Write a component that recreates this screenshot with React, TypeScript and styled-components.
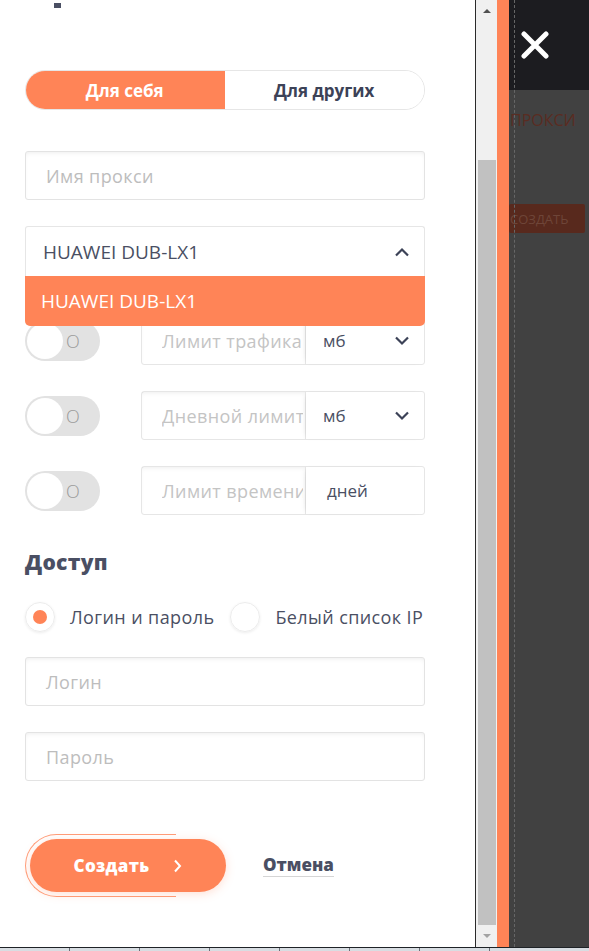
import React from 'react'
import styled, { createGlobalStyle } from 'styled-components'

const GlobalStyle = createGlobalStyle`
    html, body {
        margin: 0;
        padding: 0;
        background: #ffffff;
    }
    body {
        font-family: 'Open Sans', Lato, sans-serif;
        overflow: hidden;
    }
    * {
        box-sizing: border-box;
    }
`

const Screen = styled.div`
    width: 589px;
    height: 951px;
    display: flex;
    flex-direction: column;
`
const Main = styled.div`
    flex: 1;
    display: flex;
    min-height: 0;
`
const Panel = styled.div`
    width: 476px;
    border-right: 1px solid #2a2a2a;
    background: #ffffff;
    padding: 0 50px 0 25px;
    position: relative;
    overflow: hidden;
`
const HeadingTail = styled.div`
    width: 7px;
    height: 5px;
    margin: 3px 0 0 29px;
    background: #4a4f63;
`
const Tabs = styled.div`
    margin-top: 62px;
    height: 40px;
    display: flex;
    border-radius: 20px;
    border: 1px solid #e6e6e6;
    overflow: hidden;
`
const Tab = styled.div<{ $active?: boolean }>`
    flex: 1;
    display: flex;
    align-items: center;
    justify-content: center;
    font-size: 17px;
    font-weight: 700;
    color: ${(p) => (p.$active ? '#ffffff' : '#3c4257')};
    background: ${(p) => (p.$active ? '#ff8457' : '#ffffff')};
    margin: ${(p) => (p.$active ? '-1px 0 -1px -1px' : '0')};
`
const Field = styled.div<{ $top: number }>`
    margin-top: ${(p) => p.$top}px;
    height: 49px;
    border: 1px solid #e3e3e3;
    border-radius: 3px;
    box-shadow: inset 0 3px 6px -4px rgba(0, 0, 0, 0.12);
    display: flex;
    align-items: center;
    padding-left: 20px;
    font-size: 18px;
    letter-spacing: 0.4px;
    color: #bdbdbd;
`
const SelectWrap = styled.div`
    position: relative;
    margin-top: 26px;
`
const SelectBox = styled.div`
    height: 50px;
    border: 1px solid #e6e6e6;
    border-bottom: none;
    border-radius: 3px 3px 0 0;
    display: flex;
    align-items: center;
    justify-content: space-between;
    padding: 0 14px 0 17px;
    font-size: 19px;
    color: #4a4f63;
`
const Option = styled.div`
    position: absolute;
    left: 0;
    right: 0;
    top: 50px;
    height: 50px;
    background: #ff8457;
    border-radius: 0 0 5px 5px;
    color: #ffffff;
    font-size: 19px;
    display: flex;
    align-items: center;
    padding-left: 16px;
    z-index: 2;
`
const LimitRow = styled.div<{ $top: number }>`
    margin-top: ${(p) => p.$top}px;
    height: 49px;
    display: flex;
    align-items: center;
`
const Toggle = styled.div`
    width: 75px;
    height: 40px;
    border-radius: 20px;
    background: #e2e2e2;
    position: relative;
    display: flex;
    align-items: center;
    padding-left: 41px;
    font-size: 18px;
    font-weight: 300;
    color: #9a9a9a;
    &::before {
        content: '';
        position: absolute;
        left: 2px;
        top: 2px;
        width: 36px;
        height: 36px;
        border-radius: 50%;
        background: #ffffff;
    }
`
const Group = styled.div`
    margin-left: 41px;
    flex: 1;
    height: 49px;
    display: flex;
    border: 1px solid #e6e6e6;
    border-radius: 3px;
`
const GroupInput = styled.div`
    width: 164px;
    border-right: 1px solid #e6e6e6;
    box-shadow: inset 0 3px 6px -4px rgba(0, 0, 0, 0.12);
    display: flex;
    align-items: center;
    padding: 0 2px 0 20px;
    font-size: 18px;
    letter-spacing: 0.4px;
    color: #c4c4c4;
`
const Clip = styled.span`
    flex: 1;
    white-space: nowrap;
    overflow: hidden;
`
const Unit = styled.div<{ $pad: number }>`
    flex: 1;
    display: flex;
    align-items: center;
    justify-content: space-between;
    padding: 0 14px 0 ${(p) => p.$pad}px;
    font-size: 17px;
    color: #4a4f63;
    box-shadow: -3px 0 6px -4px rgba(0, 0, 0, 0.15);
`
const SectionTitle = styled.div`
    margin-top: 33px;
    font-size: 21px;
    font-weight: 800;
    letter-spacing: 0.3px;
    color: #4a4f63;
`
const Radios = styled.div`
    margin-top: 26px;
    display: flex;
    align-items: center;
`
const Radio = styled.div<{ $checked?: boolean }>`
    width: 30px;
    height: 30px;
    border-radius: 50%;
    border: 1px solid #ececec;
    box-shadow: 0 1px 3px rgba(0, 0, 0, 0.08);
    display: flex;
    align-items: center;
    justify-content: center;
    flex-shrink: 0;
    &::after {
        content: '';
        width: 14px;
        height: 14px;
        border-radius: 50%;
        background: ${(p) => (p.$checked ? '#ff8457' : 'transparent')};
    }
`
const RadioLabel = styled.div`
    margin: 0 16px 0 15px;
    font-size: 18px;
    letter-spacing: 0.4px;
    color: #4a4f63;
    white-space: nowrap;
`
const Actions = styled.div`
    margin-top: 58px;
    display: flex;
    align-items: center;
`
const CreateButton = styled.div`
    margin-left: 5px;
    width: 196px;
    height: 53px;
    border-radius: 27px;
    background: #ff8457;
    color: #ffffff;
    font-size: 17px;
    font-weight: 800;
    letter-spacing: 0.3px;
    display: flex;
    align-items: center;
    justify-content: center;
    gap: 24px;
    position: relative;
    box-shadow: 0 2px 10px rgba(255, 132, 87, 0.25);
    &::before {
        content: '';
        position: absolute;
        left: -5px;
        top: -5px;
        bottom: -5px;
        width: 150px;
        border: 1px solid #ff8457;
        border-right: none;
        border-radius: 32px 0 0 32px;
        opacity: 0.8;
    }
`
const Cancel = styled.div`
    margin-left: 37px;
    font-size: 17px;
    font-weight: 800;
    color: #4a4f63;
    border-bottom: 1px solid #d5d5d5;
    line-height: 22px;
`
const Scrollbar = styled.div`
    width: 21px;
    background: #f0f0f0;
    display: flex;
    flex-direction: column;
    align-items: center;
`
const Arrow = styled.div<{ $down?: boolean }>`
    height: 22px;
    display: flex;
    align-items: center;
    justify-content: center;
    &::after {
        content: '';
        border-left: 4px solid transparent;
        border-right: 4px solid transparent;
        ${(p) =>
            p.$down ? 'border-top: 4px solid #a3a3a3;' : 'border-bottom: 4px solid #505050;'}
    }
`
const Thumb = styled.div`
    margin-top: 138px;
    width: 18px;
    flex: 1;
    background: #c1c1c1;
`
const Accent = styled.div`
    width: 12px;
    background: #ff8457;
`
const Backdrop = styled.div`
    flex: 1;
    background: #414141;
    display: flex;
    flex-direction: column;
    position: relative;
    &::before {
        content: '';
        position: absolute;
        left: 5px;
        top: 0;
        bottom: 0;
        border-left: 1px dashed #666666;
    }
`
const CloseBar = styled.div`
    height: 90px;
    background: #1c1c20;
    display: flex;
    align-items: center;
    padding-left: 12px;
`
const BackTitle = styled.div`
    margin-top: 19px;
    font-size: 16px;
    color: #5a2c22;
    padding-left: 1px;
`
const BackButton = styled.div`
    margin: 73px 4px 0 0;
    height: 29px;
    background: #58291d;
    border-radius: 2px;
    display: flex;
    align-items: center;
    padding-left: 1px;
    font-size: 13px;
    color: #6e4538;
`
const Taskbar = styled.div`
    height: 4px;
    background: #d8dde2;
    border-top: 1px solid #1e2226;
    display: flex;
`
const TaskSlot = styled.div`
    width: 70px;
    border-right: 1px solid #6a7078;
`

const ChevronUp = () => (
    <svg width="16" height="10" viewBox="0 0 16 10">
        <path d="M2 8.5 L8 2.5 L14 8.5" fill="none" stroke="#3c4257" strokeWidth="2.2" />
    </svg>
)
const ChevronDown = () => (
    <svg width="16" height="10" viewBox="0 0 16 10">
        <path d="M2 1.5 L8 7.5 L14 1.5" fill="none" stroke="#3c4257" strokeWidth="2.2" />
    </svg>
)
const ArrowRight = () => (
    <svg width="9" height="14" viewBox="0 0 9 14">
        <path d="M2 1.5 L7 7 L2 12.5" fill="none" stroke="#ffffff" strokeWidth="2" />
    </svg>
)
const CloseIcon = () => (
    <svg width="28" height="28" viewBox="0 0 28 28">
        <path d="M3 3 L25 25 M25 3 L3 25" stroke="#ffffff" strokeWidth="5" strokeLinecap="round" />
    </svg>
)

const limits = [
    { placeholder: 'Лимит трафика', unit: 'мб', select: true, top: 40, pad: 17 },
    { placeholder: 'Дневной лимит', unit: 'мб', select: true, top: 26, pad: 17 },
    { placeholder: 'Лимит времени', unit: 'дней', select: false, top: 26, pad: 21 },
]

export default function App() {
    return (
        <Screen>
            <GlobalStyle />
            <Main>
                <Panel>
                    <HeadingTail />
                    <Tabs>
                        <Tab $active>Для себя</Tab>
                        <Tab>Для других</Tab>
                    </Tabs>
                    <Field $top={41}>Имя прокси</Field>
                    <SelectWrap>
                        <SelectBox>
                            HUAWEI DUB-LX1
                            <ChevronUp />
                        </SelectBox>
                        <Option>HUAWEI DUB-LX1</Option>
                    </SelectWrap>
                    {limits.map((l) => (
                        <LimitRow key={l.placeholder} $top={l.top}>
                            <Toggle>O</Toggle>
                            <Group>
                                <GroupInput>
                                    <Clip>{l.placeholder}</Clip>
                                </GroupInput>
                                <Unit $pad={l.pad}>
                                    {l.unit}
                                    {l.select && <ChevronDown />}
                                </Unit>
                            </Group>
                        </LimitRow>
                    ))}
                    <SectionTitle>Доступ</SectionTitle>
                    <Radios>
                        <Radio $checked />
                        <RadioLabel>Логин и пароль</RadioLabel>
                        <Radio />
                        <RadioLabel>Белый список IP</RadioLabel>
                    </Radios>
                    <Field $top={25}>Логин</Field>
                    <Field $top={26}>Пароль</Field>
                    <Actions>
                        <CreateButton>
                            Создать
                            <ArrowRight />
                        </CreateButton>
                        <Cancel>Отмена</Cancel>
                    </Actions>
                </Panel>
                <Scrollbar>
                    <Arrow />
                    <Thumb />
                    <Arrow $down />
                </Scrollbar>
                <Accent />
                <Backdrop>
                    <CloseBar>
                        <CloseIcon />
                    </CloseBar>
                    <BackTitle>ПРОКСИ</BackTitle>
                    <BackButton>СОЗДАТЬ</BackButton>
                </Backdrop>
            </Main>
            <Taskbar>
                <TaskSlot />
                <TaskSlot />
                <TaskSlot />
                <TaskSlot />
                <TaskSlot />
                <TaskSlot />
                <TaskSlot />
            </Taskbar>
        </Screen>
    )
}
